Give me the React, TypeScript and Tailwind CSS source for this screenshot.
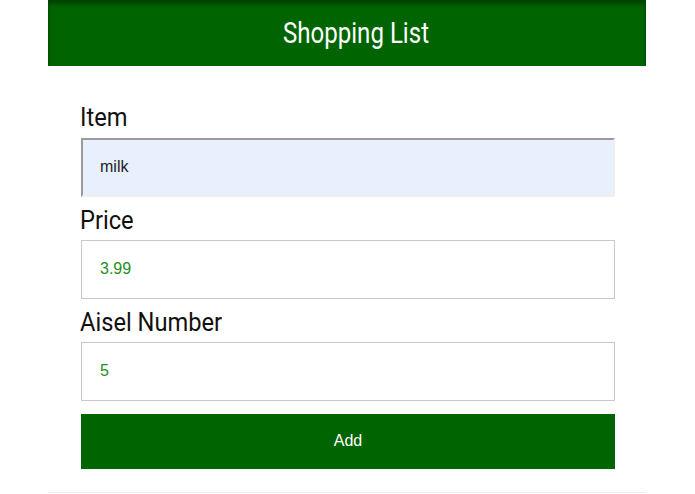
export default function App() {
  const narrow = { fontFamily: 'Roboto, "Liberation Sans", sans-serif' };
  return (
    <div className="min-h-screen bg-white">
      <div className="ml-[48px] w-[598px] border-b border-[#eeeeee] pb-[23px]">
        <header className="flex h-[66px] items-center justify-center bg-[#006400] pl-[18px] shadow-[inset_0_4px_4px_rgba(0,0,0,0.35)]">
          <h1 className="inline-block origin-center scale-x-[0.83] text-[29px] leading-none text-white" style={narrow}>
            Shopping List
          </h1>
        </header>

        <form className="pl-[33px] pr-[31px] pt-[36px]" style={{ fontFamily: '"Liberation Sans", Arial, sans-serif' }}>
          <div className="mb-[6px] h-[30px]">
            <label className="-ml-px inline-block origin-left scale-x-[0.91] text-[26px] leading-[30px] text-[#111]" style={narrow}>
              Item
            </label>
          </div>
          <input
            defaultValue="milk"
            className="mb-[8px] block h-[59px] w-full border-2 border-t-[#9a9a9a] border-l-[#9a9a9a] border-r-[#eeeeee] border-b-[#eeeeee] bg-[#e8f0fe] pl-[17px] pb-[1px] text-[16px] text-[#222] outline-none"
          />

          <div className="mb-[5px] h-[30px]">
            <label className="-ml-px inline-block origin-left scale-x-[0.91] text-[26px] leading-[30px] text-[#111]" style={narrow}>
              Price
            </label>
          </div>
          <input
            defaultValue="3.99"
            className="mb-[8px] block h-[59px] w-full border border-[#c8c8c8] bg-white pl-[18px] pb-[1px] text-[16px] text-[#1f8f1f] outline-none"
          />

          <div className="mb-[5px] h-[30px]">
            <label className="-ml-px inline-block origin-left scale-x-[0.91] text-[26px] leading-[30px] text-[#111]" style={narrow}>
              Aisel Number
            </label>
          </div>
          <input
            defaultValue="5"
            className="mb-[13px] block h-[59px] w-full border border-[#c8c8c8] bg-white pl-[18px] pb-[1px] text-[16px] text-[#1f8f1f] outline-none"
          />

          <button type="button" className="block h-[55px] w-full bg-[#006400] pb-[1px] text-[16px] text-white">
            Add
          </button>
        </form>
      </div>
    </div>
  );
}
